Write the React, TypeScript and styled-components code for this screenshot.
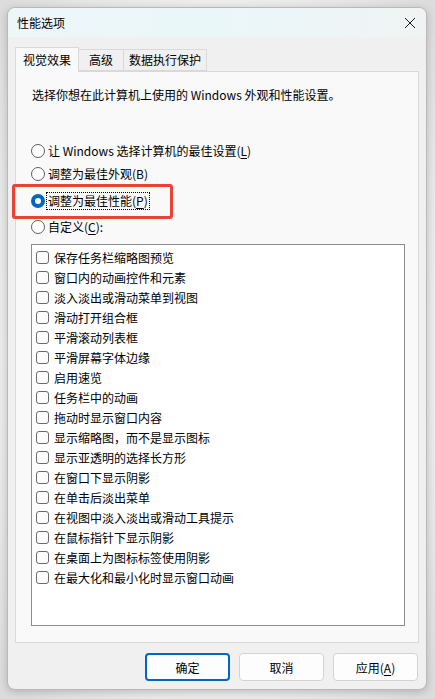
import * as React from 'react';
import styled, { createGlobalStyle } from 'styled-components';

const GlobalStyle = createGlobalStyle`
    html, body {
        margin: 0;
        padding: 0;
        background: #e9e9e9;
    }
    body {
        font-family: "Noto Sans CJK SC", "Noto Sans", sans-serif;
        font-size: 12px;
        color: #000;
    }
`;

const Page = styled.div`
    width: 435px;
    height: 699px;
    padding: 7px 8px 9px 7px;
    box-sizing: border-box;
    background: radial-gradient(ellipse at center, #f4f4f4 60%, #dcdcdc 100%);
`;

const Window = styled.div`
    width: 420px;
    height: 683px;
    box-sizing: border-box;
    border: 1px solid #b9b9b9;
    border-radius: 8px;
    background: #f0f0f0;
    box-shadow: 0 2px 10px rgba(0, 0, 0, 0.22);
    display: flex;
    flex-direction: column;
    overflow: hidden;
    position: relative;
`;

const TitleBar = styled.div`
    height: 29px;
    display: flex;
    align-items: center;
    justify-content: space-between;
    padding: 0 10px 0 9px;
    background: linear-gradient(90deg, #eef6f8 0%, #e9f7f9 45%, #f0f3f4 100%);
`;

const Title = styled.span`
    font-size: 12px;
    line-height: 16px;
`;

const CloseIcon = styled.svg`
    width: 12px;
    height: 12px;
`;

const Body = styled.div`
    flex: 1;
    display: flex;
    flex-direction: column;
    padding: 10px 8px 0 7px;
`;

const TabRow = styled.div`
    display: flex;
    align-items: flex-end;
    height: 24px;
`;

const Tab = styled.div<{ $active?: boolean; $width: number }>`
    box-sizing: border-box;
    width: ${(p) => p.$width}px;
    height: ${(p) => (p.$active ? '25px' : '22px')};
    display: flex;
    align-items: center;
    justify-content: center;
    border: 1px solid #d9d9d9;
    border-bottom: ${(p) => (p.$active ? 'none' : '1px solid #d9d9d9')};
    border-left: ${(p) => (p.$active ? '1px solid #d9d9d9' : 'none')};
    background: ${(p) => (p.$active ? '#f9f9f9' : '#f0f0f0')};
    margin-bottom: ${(p) => (p.$active ? '-1px' : '0')};
    position: relative;
    z-index: ${(p) => (p.$active ? 1 : 0)};
    line-height: 16px;
`;

const Panel = styled.div`
    box-sizing: border-box;
    width: 404px;
    height: 572px;
    border: 1px solid #d9d9d9;
    background: #f9f9f9;
    padding: 14px 0 0 15px;
    display: flex;
    flex-direction: column;
`;

const Description = styled.div`
    line-height: 17px;
    padding-left: 1px;
`;

const RadioGroup = styled.div`
    display: flex;
    flex-direction: column;
    margin-top: 39px;
    position: relative;
`;

const RadioRow = styled.label<{ $gap: number }>`
    display: flex;
    align-items: center;
    height: 18px;
    margin-top: ${(p) => p.$gap}px;
    position: relative;
`;

const RadioCircle = styled.span<{ $checked?: boolean }>`
    box-sizing: border-box;
    width: 14px;
    height: 14px;
    border-radius: 50%;
    border: ${(p) => (p.$checked ? '4px solid #0067c0' : '1px solid #5f5f5f')};
    background: #fff;
    margin-right: 2px;
    flex-shrink: 0;
`;

const RadioLabel = styled.span<{ $focused?: boolean }>`
    line-height: 16px;
    padding: 0 1px;
    outline: ${(p) => (p.$focused ? '1px dotted #000' : 'none')};
`;

const Key = styled.u`
    text-decoration-thickness: 1px;
    text-underline-offset: 2px;
`;

const Highlight = styled.div`
    position: absolute;
    left: -19px;
    top: -8px;
    width: 161px;
    height: 35px;
    box-sizing: border-box;
    border: 3px solid #ea4335;
    border-radius: 3px;
    pointer-events: none;
`;

const ListBox = styled.div`
    box-sizing: border-box;
    width: 374px;
    height: 382px;
    margin-top: 8px;
    border: 1px solid #8c8c8c;
    background: #fff;
    padding: 2px 0 0 4px;
    display: flex;
    flex-direction: column;
`;

const CheckRow = styled.div`
    display: flex;
    align-items: center;
    height: 20px;
`;

const CheckBox = styled.span`
    box-sizing: border-box;
    width: 13px;
    height: 13px;
    border: 1px solid #6a6a6a;
    border-radius: 3px;
    background: #fcfcfc;
    margin-right: 5px;
    flex-shrink: 0;
`;

const Footer = styled.div`
    display: flex;
    justify-content: flex-end;
    gap: 9px;
    padding: 10px 0 0 0;
`;

const Button = styled.button<{ $primary?: boolean }>`
    box-sizing: border-box;
    width: 85px;
    height: 28px;
    border-radius: 4px;
    font-family: inherit;
    font-size: 12px;
    color: #000;
    background: #fdfdfd;
    border: ${(p) => (p.$primary ? '2px solid #0067c0' : '1px solid #d3d3d3')};
    padding: 0;
`;

const options = [
    '保存任务栏缩略图预览',
    '窗口内的动画控件和元素',
    '淡入淡出或滑动菜单到视图',
    '滑动打开组合框',
    '平滑滚动列表框',
    '平滑屏幕字体边缘',
    '启用速览',
    '任务栏中的动画',
    '拖动时显示窗口内容',
    '显示缩略图，而不是显示图标',
    '显示亚透明的选择长方形',
    '在窗口下显示阴影',
    '在单击后淡出菜单',
    '在视图中淡入淡出或滑动工具提示',
    '在鼠标指针下显示阴影',
    '在桌面上为图标标签使用阴影',
    '在最大化和最小化时显示窗口动画',
];

function App(): React.ReactElement {
    return (
        <>
            <GlobalStyle />
            <Page>
                <Window>
                    <TitleBar>
                        <Title>性能选项</Title>
                        <CloseIcon viewBox="0 0 12 12">
                            <path
                                d="M1 1 L11 11 M11 1 L1 11"
                                stroke="#1a1a1a"
                                strokeWidth="1"
                                fill="none"
                            />
                        </CloseIcon>
                    </TitleBar>
                    <Body>
                        <TabRow>
                            <Tab $active $width={64}>视觉效果</Tab>
                            <Tab $width={45}>高级</Tab>
                            <Tab $width={83}>数据执行保护</Tab>
                        </TabRow>
                        <Panel>
                            <Description>
                                选择你想在此计算机上使用的 Windows 外观和性能设置。
                            </Description>
                            <RadioGroup>
                                <RadioRow $gap={0}>
                                    <RadioCircle />
                                    <RadioLabel>
                                        让 Windows 选择计算机的最佳设置(<Key>L</Key>)
                                    </RadioLabel>
                                </RadioRow>
                                <RadioRow $gap={5}>
                                    <RadioCircle />
                                    <RadioLabel>调整为最佳外观(B)</RadioLabel>
                                </RadioRow>
                                <RadioRow $gap={9}>
                                    <Highlight />
                                    <RadioCircle $checked />
                                    <RadioLabel $focused>
                                        调整为最佳性能(<Key>P</Key>)
                                    </RadioLabel>
                                </RadioRow>
                                <RadioRow $gap={8}>
                                    <RadioCircle />
                                    <RadioLabel>
                                        自定义(<Key>C</Key>):
                                    </RadioLabel>
                                </RadioRow>
                            </RadioGroup>
                            <ListBox>
                                {options.map((text) => (
                                    <CheckRow key={text}>
                                        <CheckBox />
                                        <span>{text}</span>
                                    </CheckRow>
                                ))}
                            </ListBox>
                        </Panel>
                        <Footer>
                            <Button $primary>确定</Button>
                            <Button>取消</Button>
                            <Button>
                                应用(<Key>A</Key>)
                            </Button>
                        </Footer>
                    </Body>
                </Window>
            </Page>
        </>
    );
}

export default App;
